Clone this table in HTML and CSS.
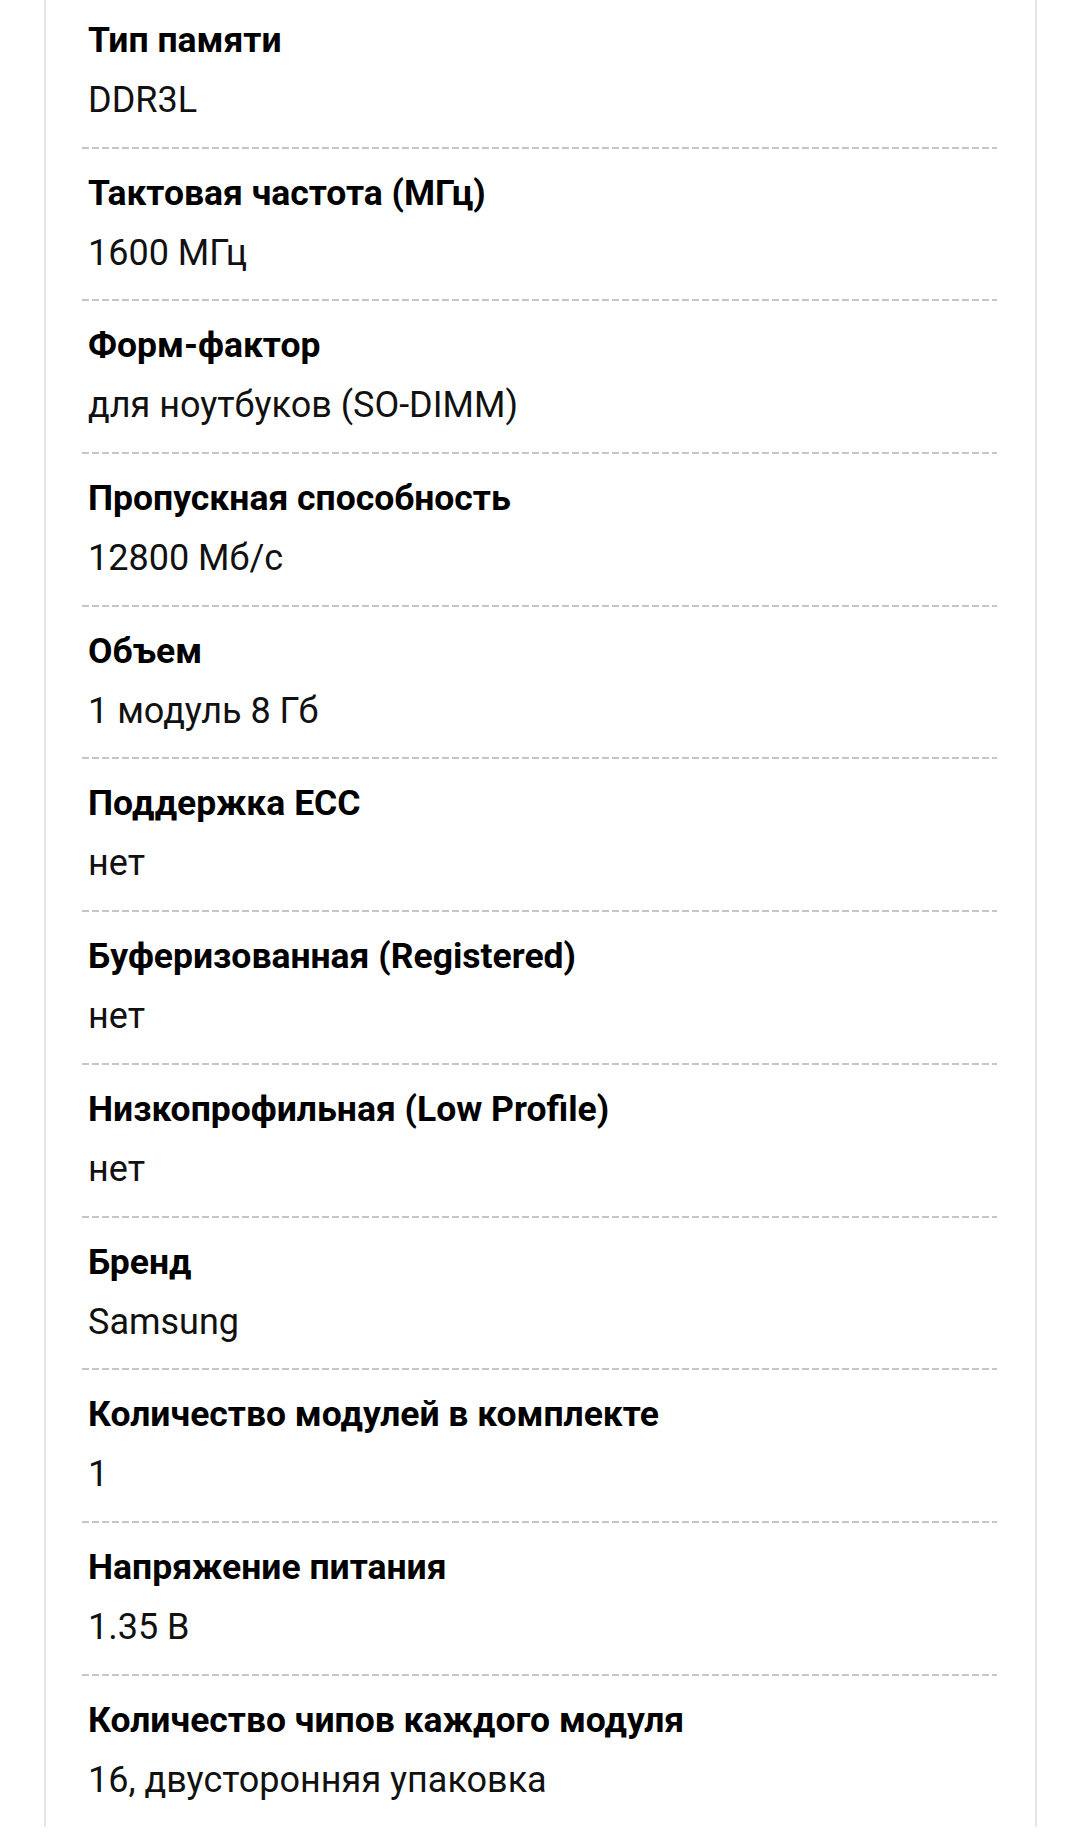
FILE: index.html
```html
<!DOCTYPE html>
<html lang="ru">

<head>
  <meta charset="UTF-8">
  <meta name="viewport" content="width=device-width, initial-scale=1.0">
  <title>Характеристики</title>

  <link rel="stylesheet" href="styles.css">

</head>

<body>

  <div class="card">
    <ul class="specList">
      <li class="specRow">
        <div class="specName">Тип памяти</div>
        <div class="specValue">DDR3L</div>
      </li>
      <li class="specRow">
        <div class="specName">Тактовая частота (МГц)</div>
        <div class="specValue">1600 МГц</div>
      </li>
      <li class="specRow">
        <div class="specName">Форм-фактор</div>
        <div class="specValue">для ноутбуков (SO-DIMM)</div>
      </li>
      <li class="specRow">
        <div class="specName">Пропускная способность</div>
        <div class="specValue">12800 Мб/с</div>
      </li>
      <li class="specRow">
        <div class="specName">Объем</div>
        <div class="specValue">1 модуль 8 Гб</div>
      </li>
      <li class="specRow">
        <div class="specName">Поддержка ECC</div>
        <div class="specValue">нет</div>
      </li>
      <li class="specRow">
        <div class="specName">Буферизованная (Registered)</div>
        <div class="specValue">нет</div>
      </li>
      <li class="specRow">
        <div class="specName">Низкопрофильная (Low Profile)</div>
        <div class="specValue">нет</div>
      </li>
      <li class="specRow">
        <div class="specName">Бренд</div>
        <div class="specValue">Samsung</div>
      </li>
      <li class="specRow">
        <div class="specName">Количество модулей в комплекте</div>
        <div class="specValue">1</div>
      </li>
      <li class="specRow">
        <div class="specName">Напряжение питания</div>
        <div class="specValue">1.35 В</div>
      </li>
      <li class="specRow">
        <div class="specName">Количество чипов каждого модуля</div>
        <div class="specValue">16, двусторонняя упаковка</div>
      </li>
    </ul>
  </div>

</body>

</html>
```

FILE: styles.css
```css
html,
body {
  margin: 0;
  background-color: white;
  font-family: Roboto, "Noto Sans", sans-serif;
}

/* card */
.card {
  margin: 0 43px 0 44px;
  min-height: 1833px;
  border-left: 2px solid #e6e6e6;
  border-right: 2px solid #e6e6e6;
  background-color: white;
}

.specList {
  list-style: none;
  margin: 0 38px 0 36px;
  margin-top: -6px;
  padding: 0;
}

/* rows */
.specRow {
  padding: 26px 0 26.7px 6px;
  background-image: linear-gradient(to right, #c6c6c6 68%, transparent 68%);
  background-size: 10px 2px;
  background-repeat: repeat-x;
  background-position: left top;
}

.specName {
  font-size: 35.5px;
  line-height: 40px;
  font-weight: bold;
  color: #000;
}

.specValue {
  margin-top: 20px;
  font-size: 36px;
  line-height: 40px;
  color: #111;
}
```
